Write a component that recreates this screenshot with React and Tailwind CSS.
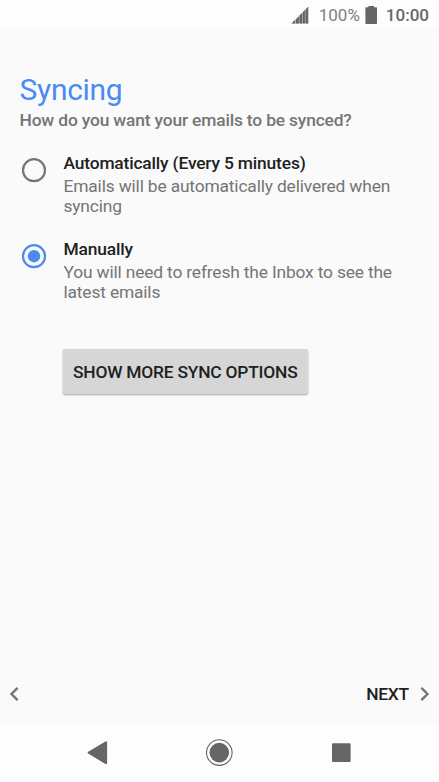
import React, { useState } from 'react';

const options = [
  {
    id: 'auto',
    title: 'Automatically (Every 5 minutes)',
    text: 'Emails will be automatically delivered when syncing',
  },
  {
    id: 'manual',
    title: 'Manually',
    text: 'You will need to refresh the Inbox to see the latest emails',
  },
];

function StatusBar() {
  return (
    <header className="flex h-[29px] items-center justify-end bg-[#fdfdfd] pr-[10px] pt-[2px] text-[17px]">
      <svg className="mb-[2px] h-[18px] w-[18px]" viewBox="0 0 18 18" fill="#666">
        <path d="M0.5 17.5L4 14v3.5zM5 13.2l2.8-2.8v7.1H5zM8.6 9.6l2.5-2.6v10.5H8.6zM11.9 6.2l2-2.1v13.4h-2zM14.6 3.4L17.2 0.7v16.8h-2.6z" />
        <path d="M0.5 17.5L17.2 0.7v16.8z" opacity="0.5" />
      </svg>
      <span className="ml-[10px] text-[#808080]">100%</span>
      <svg className="mb-[1px] ml-[5px] h-[18px] w-[12px]" viewBox="0 0 12 18" fill="#666">
        <path d="M3.4 0h5.6v1.2H11.2a.8.8 0 0 1 .8.8v15.2a.8.8 0 0 1-.8.8H1.2a.8.8 0 0 1-.8-.8V2a.8.8 0 0 1 .8-.8h2.2z" />
      </svg>
      <span className="ml-[9px] font-medium text-[#666]">10:00</span>
    </header>
  );
}

function Radio({ checked }) {
  const color = checked ? '#4a8af4' : '#757575';
  return (
    <svg className="mt-[4px] h-[26px] w-[26px] shrink-0" viewBox="0 0 26 26">
      <circle cx="13" cy="13.2" r="11" fill="none" stroke={color} strokeWidth="2.2" />
      {checked && <circle cx="13" cy="13.2" r="6.2" fill={color} />}
    </svg>
  );
}

function NavBar() {
  return (
    <nav className="flex h-[58px] items-center justify-center gap-[94px] bg-[#fdfdfd] pr-[1px]">
      <button aria-label="Back">
        <svg className="h-[28px] w-[28px]" viewBox="0 0 28 28" fill="#666">
          <path d="M5.2 12.8L22.4 2.4Q24.1 1.7 24.1 3.2V24.1Q24.1 25.7 22.4 24.9L5.2 14.4Q4 13.6 5.2 12.8z" />
        </svg>
      </button>
      <button aria-label="Home">
        <svg className="h-[28px] w-[28px]" viewBox="0 0 28 28">
          <circle cx="14.3" cy="13.6" r="12.8" fill="none" stroke="#666" strokeWidth="1.1" />
          <circle cx="14.3" cy="13.6" r="9.8" fill="#666" />
        </svg>
      </button>
      <button aria-label="Recent apps">
        <svg className="h-[28px] w-[28px]" viewBox="0 0 28 28" fill="#666">
          <rect x="5" y="4.3" width="18.6" height="18.6" rx="1" />
        </svg>
      </button>
    </nav>
  );
}

export default function App() {
  const [selected, setSelected] = useState('manual');

  return (
    <div className="flex h-[782px] w-[439px] flex-col overflow-hidden bg-[#fafafa] font-[Roboto,sans-serif]">
      <StatusBar />

      <main className="flex-1 pl-[19.5px] pr-5 pt-[43px]">
        <h1 className="text-[30px] leading-[36px] tracking-[-0.3px] text-[#4a8af4]">Syncing</h1>
        <p className="mt-[2px] text-[17.4px] font-medium leading-[20px] tracking-[-0.17px] text-[#757575]">
          How do you want your emails to be synced?
        </p>

        <div className="mt-[23px] flex flex-col gap-[23px]">
          {options.map((option) => (
            <button
              key={option.id}
              onClick={() => setSelected(option.id)}
              className="flex items-start pl-[1.5px] text-left text-[17.4px] tracking-[-0.17px]"
            >
              <Radio checked={selected === option.id} />
              <span className="ml-[16.5px] flex w-[345px] flex-col">
                <span className="font-medium leading-[20px] text-[#212121]">{option.title}</span>
                <span className="mt-[3px] leading-[20px] text-[#757575]">{option.text}</span>
              </span>
            </button>
          ))}
        </div>

        <button className="ml-[43.5px] mt-[47px] h-[45px] w-[244.5px] whitespace-nowrap rounded-[2px] bg-[#d6d6d6] pt-[2px] text-[17.4px] font-medium tracking-[-0.22px] text-[#212121] shadow-[0_1px_2px_rgba(0,0,0,0.35)]">
          SHOW MORE SYNC OPTIONS
        </button>
      </main>

      <footer className="flex h-[60px] items-center justify-between px-[9px]">
        <button aria-label="Previous">
          <svg className="h-[14px] w-[10px]" viewBox="0 0 10 14" fill="none" stroke="#757575" strokeWidth="2.4">
            <path d="M8.6 0.9L2.5 7l6.1 6.1" />
          </svg>
        </button>
        <button className="flex items-center text-[17.4px] font-medium leading-[26px] tracking-[-0.22px] text-[#212121]">
          NEXT
          <svg className="ml-[11px] h-[14px] w-[10px]" viewBox="0 0 10 14" fill="none" stroke="#757575" strokeWidth="2.4">
            <path d="M1.4 0.9L7.5 7l-6.1 6.1" />
          </svg>
        </button>
      </footer>

      <NavBar />
    </div>
  );
}
